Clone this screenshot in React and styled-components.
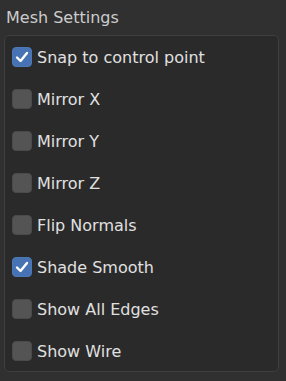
import React, { useState } from "react";
import styled, { createGlobalStyle } from "styled-components";

const Global = createGlobalStyle`
  html, body { margin: 0; padding: 0; background: #303030; }
  body { font-family: "DejaVu Sans", "Liberation Sans", sans-serif; }
`;

const Page = styled.div`
  width: 286px;
  height: 381px;
  box-sizing: border-box;
  padding: 0 7px 0 4px;
  display: flex;
  flex-direction: column;
`;

const Title = styled.div`
  height: 35px;
  box-sizing: border-box;
  padding: 8px 0 0 2px;
  color: #cccccc;
  font-size: 16px;
  line-height: 20px;
`;

const Panel = styled.div`
  background: #2a2a2a;
  border: 1px solid #3e3e3e;
  border-radius: 5px;
  padding: 11px 0 10px 7px;
  display: flex;
  flex-direction: column;
  gap: 22px;
`;

const Row = styled.label`
  display: flex;
  align-items: center;
  gap: 5px;
  height: 20px;
  cursor: pointer;
  color: #e0e0e0;
  font-size: 16px;
`;

const Box = styled.span`
  width: 20px;
  height: 20px;
  border-radius: 4px;
  box-sizing: border-box;
  background: ${(p) => (p.$checked ? "#4772b3" : "#545454")};
  border: 1px solid ${(p) => (p.$checked ? "#4d78b8" : "#4a4a4a")};
  display: flex;
  align-items: center;
  justify-content: center;
  flex-shrink: 0;
`;

const items = [
  ["Snap to control point", true],
  ["Mirror X", false],
  ["Mirror Y", false],
  ["Mirror Z", false],
  ["Flip Normals", false],
  ["Shade Smooth", true],
  ["Show All Edges", false],
  ["Show Wire", false],
];

export default function App() {
  const [state, setState] = useState(items.map((i) => i[1]));
  return (
    <>
      <Global />
      <Page>
        <Title>Mesh Settings</Title>
        <Panel>
          {items.map(([label], i) => (
            <Row
              key={label}
              onClick={() => setState((s) => s.map((v, j) => (j === i ? !v : v)))}
            >
              <Box $checked={state[i]}>
                {state[i] && (
                  <svg width="16" height="16" viewBox="0 0 16 16">
                    <path
                      d="M3 8.5 L6.5 12 L13 4"
                      fill="none"
                      stroke="#ffffff"
                      strokeWidth="2.4"
                      strokeLinecap="round"
                      strokeLinejoin="round"
                    />
                  </svg>
                )}
              </Box>
              {label}
            </Row>
          ))}
        </Panel>
      </Page>
    </>
  );
}
